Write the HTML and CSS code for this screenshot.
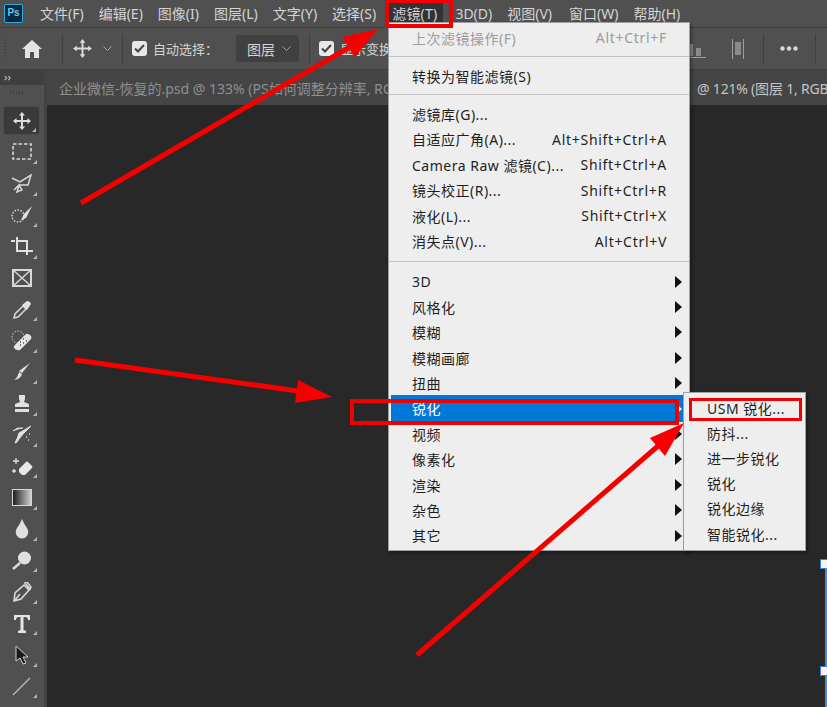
FILE: index.html
```html
<!DOCTYPE html>
<html>

<head>
    <meta charset="UTF-8" />
    <title>Photoshop</title>
    <link rel="stylesheet" href="styles.css">
</head>

<body>
    <div class="app">
        <div class="menubar">
            <span class="logo">Ps</span>
            <span class="mi">文件(F)</span>
            <span class="mi">编辑(E)</span>
            <span class="mi">图像(I)</span>
            <span class="mi">图层(L)</span>
            <span class="mi">文字(Y)</span>
            <span class="mi">选择(S)</span>
            <span class="mi active">滤镜(T)</span>
            <span class="mi">3D(D)</span>
            <span class="mi">视图(V)</span>
            <span class="mi mi-window">窗口(W)</span>
            <span class="mi">帮助(H)</span>
        </div>

        <div class="optbar">
            <span class="optgrip"></span>
            <svg class="home" width="20" height="18" viewBox="0 0 20 18"><path d="M10 0 L20 9 H17 V18 H12 V12 H8 V18 H3 V9 H0 Z" fill="#e4e4e4"/></svg>
            <span class="vsep"></span>
            <svg class="move" width="19" height="19" viewBox="0 0 20 20"><path d="M10 0 L13 4 H11 V9 H16 V7 L20 10 L16 13 V11 H11 V16 H13 L10 20 L7 16 H9 V11 H4 V13 L0 10 L4 7 V9 H9 V4 H7 Z" fill="#dcdcdc"/></svg>
            <svg class="chev" width="9" height="5" viewBox="0 0 9 5"><path d="M0.500 0.500 L4.500 4.500 L8.500 0.500" fill="none" stroke="#a5a5a5"/></svg>
            <span class="vsep"></span>
            <span class="check"><svg width="11" height="9" viewBox="0 0 11 9"><path d="M1 4.500 L4 7.500 L10 1" fill="none" stroke="#444" stroke-width="2"/></svg></span>
            <span class="optlabel">自动选择：</span>
            <span class="select">图层<svg width="9" height="5" viewBox="0 0 9 5"><path d="M0.500 0.500 L4.500 4.500 L8.500 0.500" fill="none" stroke="#a5a5a5"/></svg></span>
            <span class="vsep"></span>
            <span class="check"><svg width="11" height="9" viewBox="0 0 11 9"><path d="M1 4.500 L4 7.500 L10 1" fill="none" stroke="#444" stroke-width="2"/></svg></span>
            <span class="optlabel">显示变换控件</span>
            <div class="opt-right">
                <svg class="bars" width="16" height="18" viewBox="0 0 16 18"><path d="M0 17.500 H16" stroke="#a0a0a0"/><rect x="0" y="4" width="3" height="12" fill="#8a8a8a"/><rect x="6" y="8" width="5" height="8" fill="#8a8a8a"/></svg>
                <svg class="dist" width="12" height="20" viewBox="0 0 12 20"><path d="M0.500 0 V20 M11.500 0 V20" stroke="#a0a0a0"/><rect x="3" y="3" width="6" height="13" fill="#8a8a8a"/></svg>
                <span class="vsep"></span>
                <svg class="dots" width="18" height="5" viewBox="0 0 18 5"><circle cx="2.500" cy="2.500" r="2.200" fill="#d8d8d8"/><circle cx="9" cy="2.500" r="2.200" fill="#d8d8d8"/><circle cx="15.500" cy="2.500" r="2.200" fill="#d8d8d8"/></svg>
                <span class="vsep"></span>
            </div>
        </div>

        <div class="main">
            <div class="toolbar">
                <div class="collapse">››</div>
                <div class="grip"></div>
                <div class="tool selected"><svg width="20" height="20" viewBox="0 0 20 20"><path d="M10 1 L13 4.500 H11 V9 H15.500 V7 L19 10 L15.500 13 V11 H11 V15.500 H13 L10 19 L7 15.500 H9 V11 H4.500 V13 L1 10 L4.500 7 V9 H9 V4.500 H7 Z" fill="#dedede"/></svg></div>
                <div class="tool"><svg class="up" width="20" height="17" viewBox="0 0 20 17"><rect x="1" y="1" width="18" height="15" fill="none" stroke="#d8d8d8" stroke-width="1.600" stroke-dasharray="3.500 2"/></svg></div>
                <div class="tool"><svg width="22" height="20" viewBox="0 0 22 20"><path d="M1 4 L9 8 L20 1 L17 11 L8 11 L3 16 M8 11 L6 18 L11 16 Z" fill="none" stroke="#d8d8d8" stroke-width="1.500"/></svg></div>
                <div class="tool"><svg width="22" height="20" viewBox="0 0 22 20"><circle cx="7" cy="11" r="6" fill="none" stroke="#d8d8d8" stroke-width="1.500" stroke-dasharray="1.500 1.500"/><path d="M21 1 L13 9 L10 15 L15 13 Z" fill="#e0e0e0"/></svg></div>
                <div class="tool"><svg width="22" height="20" viewBox="0 0 22 20"><path d="M0 4 H4 M6 0 V14 H18 M6 4 H16 V18 M18 14 H22" fill="none" stroke="#e0e0e0" stroke-width="2"/></svg></div>
                <div class="tool no-tri"><svg width="20" height="18" viewBox="0 0 20 18"><rect x="1" y="1" width="18" height="16" fill="none" stroke="#d8d8d8" stroke-width="2"/><path d="M1 1 L19 17 M19 1 L1 17" stroke="#d8d8d8" stroke-width="1.500"/></svg></div>
                <div class="tool"><svg width="20" height="20" viewBox="0 0 20 20"><path d="M2 18 L3 14 L11 6 L14 9 L6 17 Z" fill="none" stroke="#d8d8d8" stroke-width="1.500"/><path d="M10 5 L15 1 Q18 1 19 4 L15 10 Z" fill="#e0e0e0"/></svg></div>
                <div class="tool"><svg width="22" height="22" viewBox="0 0 22 22"><circle cx="7" cy="7" r="6" fill="none" stroke="#d8d8d8" stroke-dasharray="1.500 1.500"/><path d="M3 16 L15 4 Q17 3 20 6 Q21 8 20 9 L9 20 Q7 21 4 19 Q2 17 3 16 Z" fill="#e4e4e4"/><path d="M9 12 h1 M12 9 h1 M12 13 h1 M9 15 h1 M15 11 h1" stroke="#555" stroke-width="1.600"/></svg></div>
                <div class="tool"><svg width="20" height="20" viewBox="0 0 20 20"><path d="M18 1 L10 11 L7 9 Z M7 10 L10 12 Q9 17 2 18 Q6 15 7 10 Z" fill="#e0e0e0"/></svg></div>
                <div class="tool"><svg width="20" height="20" viewBox="0 0 20 20"><path d="M7 1 H13 V5 L12 8 L17 10 V13 H3 V10 L8 8 L7 5 Z M3 15 H17 V18 H3 Z" fill="#e0e0e0"/></svg></div>
                <div class="tool"><svg width="22" height="20" viewBox="0 0 22 20"><path d="M20 1 L12 9 L8 14 Q6 18 4 18 Q7 12 8 8 Q12 6 20 1 Z M2 6 Q6 2 12 3" fill="#e0e0e0" stroke="#e0e0e0"/><path d="M15 12 h1 M18 9 h1 M17 15 h1" stroke="#ddd" stroke-width="1.500"/></svg></div>
                <div class="tool"><svg width="22" height="20" viewBox="0 0 22 20"><path d="M8 12 L15 5 Q16 4 17 5 L21 9 Q22 10 21 11 L14 18 H11 L8 15 Z" fill="#e8e8e8"/><path d="M5 1 V7 M2 4 H8 M3 12 V16 M1 14 H5" stroke="#e0e0e0" stroke-width="1.300"/></svg></div>
                <div class="tool"><span class="gradient"></span></div>
                <div class="tool"><svg width="14" height="20" viewBox="0 0 14 20"><path d="M7 0 Q9 5 12 9 Q15 14 11 18 Q7 21 3 18 Q-1 14 2 9 Q5 5 7 0 Z" fill="#e0e0e0"/></svg></div>
                <div class="tool"><svg width="20" height="20" viewBox="0 0 20 20"><circle cx="12.500" cy="7" r="6.500" fill="#e0e0e0"/><path d="M8 12 L1 18" stroke="#d8d8d8" stroke-width="2.500"/></svg></div>
                <div class="tool"><svg width="20" height="20" viewBox="0 0 20 20"><path d="M2 19 L3 11 L12 3 L17 8 L9 17 Z M13 1 L15 0 L19 5 L18 7 Z M3 18 L8 12" fill="none" stroke="#d8d8d8" stroke-width="1.600"/></svg></div>
                <div class="tool"><svg width="16" height="18" viewBox="0 0 16 18"><path d="M0 0 H16 V5 H14 Q14 2 11 2 H9.500 V15 L12 16 V18 H4 V16 L6.500 15 V2 H5 Q2 2 2 5 H0 Z" fill="#e4e4e4"/></svg></div>
                <div class="tool"><svg width="14" height="20" viewBox="0 0 14 20"><path d="M1 1 L13 12 H8 L11 18 L8 19 L5 13 L1 16 Z" fill="#1a1a1a" stroke="#cfcfcf"/></svg></div>
                <div class="tool"><svg width="20" height="20" viewBox="0 0 20 20"><path d="M1 19 L18 2" stroke="#bdbdbd" stroke-width="1.300"/></svg></div>
            </div>
            <div class="workspace">
                <div class="tabbar">
                    <span class="tab-left">企业微信-恢复的.psd @ 133% (PS如何调整分辨率, RGB/8#) *</span>
                    <span class="tab-right">@ 121% (图层 1, RGB</span>
                </div>
                <div class="canvas"></div>
            </div>
        </div>

        <div class="handles">
            <span class="handle"></span>
            <span class="edge edge-long"></span>
            <span class="handle"></span>
            <span class="edge"></span>
        </div>

        <!-- filter menu -->
        <div class="menu">
            <div class="row disabled"><span>上次滤镜操作(F)</span><span>Alt+Ctrl+F</span></div>
            <div class="sep"></div>
            <div class="row"><span>转换为智能滤镜(S)</span></div>
            <div class="sep"></div>
            <div class="row"><span>滤镜库(G)...</span></div>
            <div class="row"><span>自适应广角(A)...</span><span>Alt+Shift+Ctrl+A</span></div>
            <div class="row"><span>Camera Raw 滤镜(C)...</span><span>Shift+Ctrl+A</span></div>
            <div class="row"><span>镜头校正(R)...</span><span>Shift+Ctrl+R</span></div>
            <div class="row"><span>液化(L)...</span><span>Shift+Ctrl+X</span></div>
            <div class="row"><span>消失点(V)...</span><span>Alt+Ctrl+V</span></div>
            <div class="sep sep-wide"></div>
            <div class="row sub"><span>3D</span></div>
            <div class="row sub"><span>风格化</span></div>
            <div class="row sub"><span>模糊</span></div>
            <div class="row sub"><span>模糊画廊</span></div>
            <div class="row sub"><span>扭曲</span></div>
            <div class="row sub hot"><span>锐化</span></div>
            <div class="row sub"><span>视频</span></div>
            <div class="row sub"><span>像素化</span></div>
            <div class="row sub"><span>渲染</span></div>
            <div class="row sub"><span>杂色</span></div>
            <div class="row sub"><span>其它</span></div>
        </div>

        <div class="submenu">
            <div class="row"><span>USM 锐化...</span></div>
            <div class="row"><span>防抖...</span></div>
            <div class="row"><span>进一步锐化</span></div>
            <div class="row"><span>锐化</span></div>
            <div class="row"><span>锐化边缘</span></div>
            <div class="row"><span>智能锐化...</span></div>
        </div>

        <!-- red annotations -->
        <span class="box box-menu"></span>
        <span class="box box-row"></span>
        <span class="box box-usm"></span>
        <svg class="arrows" width="827" height="707" viewBox="0 0 827 707">
            <g stroke="#f50000" stroke-width="5">
                <line x1="81" y1="203" x2="350" y2="47"/>
                <line x1="75" y1="360" x2="298" y2="391"/>
                <line x1="417" y1="655" x2="658" y2="446"/>
            </g>
            <g fill="#f50000">
                <polygon points="378,29 342,37 355,57"/>
                <polygon points="332,397 298,380 295,403"/>
                <polygon points="684,423 650,438 665,456"/>
            </g>
        </svg>
    </div>
</body>

</html>
```

FILE: styles.css
```css
* {
    box-sizing: border-box;
}

html,
body {
    margin: 0;
    padding: 0;
}

body {
    width: 827px;
    height: 707px;
    overflow: hidden;
    font-family: "Noto Sans", "Noto Sans CJK SC", sans-serif;
    background-color: #282828;
}

.app {
    position: relative;
    width: 827px;
    height: 707px;
    overflow: hidden;
    display: flex;
    flex-direction: column;
}

/* top menu */
.menubar {
    display: flex;
    align-items: center;
    height: 28px;
    padding-left: 4px;
    gap: 15px;
    background-color: #505050;
    color: #d4d4d4;
    font-size: 14px;
    border-bottom: 1px solid #3c3c3c;
}

.logo {
    width: 19px;
    height: 19px;
    margin-right: 2px;
    border: 1.500px solid #31a8e0;
    border-radius: 2px;
    background-color: #0b2a3c;
    color: #6fc6ee;
    font-family: "Liberation Sans", sans-serif;
    font-size: 10px;
    font-weight: bold;
    line-height: 16px;
    text-align: center;
}

.mi {
    white-space: nowrap;
    line-height: 27px;
}

.mi.active {
    background-color: #333;
    padding: 0 6px;
    margin: 0 -3px 0 -5px;
    letter-spacing: 0.200px;
}

.mi-window {
    margin-left: 2px;
}

/* options */
.optbar {
    position: relative;
    display: flex;
    align-items: center;
    height: 42px;
    background-color: #505050;
    border-bottom: 1px solid #404040;
    color: #d4d4d4;
    font-size: 13px;
}

.optgrip {
    position: absolute;
    left: 4px;
    top: 9px;
    width: 2px;
    height: 23px;
    background: repeating-linear-gradient(#3f3f3f 0 1px, transparent 1px 3px);
}

.home {
    margin-left: 22px;
    margin-right: 20px;
}

.vsep {
    width: 1px;
    height: 30px;
    background-color: #404040;
}

.move {
    margin-left: 10px;
}

.chev {
    margin: 0 10px 0 11px;
}

.check {
    display: flex;
    align-items: center;
    justify-content: center;
    width: 15px;
    height: 15px;
    margin-left: 9px;
    border-radius: 3px;
    background-color: #e8e8e8;
}

.optlabel {
    margin-left: 6px;
    white-space: nowrap;
}

.select {
    display: flex;
    align-items: center;
    justify-content: space-between;
    width: 63px;
    height: 27px;
    margin: 0 10px 0 18px;
    padding: 0 8px 0 11px;
    border-radius: 3px;
    background-color: #404040;
    font-size: 14px;
    white-space: nowrap;
}

.opt-right {
    position: absolute;
    left: 690px;
    top: 0;
    height: 41px;
    display: flex;
    align-items: center;
}

.dist {
    margin: 0 19px 0 26px;
}

.dots {
    margin: 0 17px 0 16px;
}

/* tools */
.main {
    flex: 1;
    display: flex;
    min-height: 0;
}

.toolbar {
    width: 47px;
    display: flex;
    flex-direction: column;
    background-color: #505050;
    border-right: 3px solid #424242;
}

.collapse {
    height: 15px;
    background-color: #3f3f3f;
    color: #cfcfcf;
    font-size: 11px;
    line-height: 13px;
    padding-left: 4px;
}

.grip {
    height: 21px;
    background: repeating-linear-gradient(90deg, #3f3f3f 0 1px, transparent 1px 3px) 10px 6px / 14px 3px no-repeat;
}

.tool {
    position: relative;
    height: 31.400px;
    display: flex;
    align-items: center;
    justify-content: center;
    flex: none;
}

.tool.selected {
    margin: 0 4px 2px 3px;
    height: 29px;
    background-color: #3a3a3a;
    border: 1px solid #4c4c4c;
    border-radius: 3px;
}

.tool::after {
    content: "";
    position: absolute;
    right: 7px;
    bottom: 4px;
    border-left: 4px solid transparent;
    border-bottom: 4px solid #b4b4b4;
}

.tool.selected::after {
    right: 3px;
    bottom: 2px;
}

.tool.no-tri::after {
    display: none;
}

.up {
    margin-bottom: 2px;
}

.gradient {
    width: 20px;
    height: 17px;
    border: 1px solid #d8d8d8;
    background: linear-gradient(90deg, #1f1f1f, #cfcfcf);
}

/* documents */
.workspace {
    flex: 1;
    display: flex;
    flex-direction: column;
    min-width: 0;
}

.tabbar {
    height: 35px;
    display: flex;
    align-items: center;
    padding-left: 12px;
    background-color: #454545;
    color: #8f8f8f;
    font-size: 14px;
    white-space: nowrap;
    overflow: hidden;
}

.tab-left {
    flex: none;
    width: 638px;
    overflow: hidden;
}

.tab-right {
    flex: none;
    color: #c4c4c4;
    letter-spacing: -0.200px;
}

.canvas {
    flex: 1;
    background-color: #282828;
}

.handles {
    position: absolute;
    left: 820px;
    top: 559px;
    width: 7px;
    height: 148px;
    display: flex;
    flex-direction: column;
    align-items: flex-end;
}

.handle {
    flex: none;
    width: 7px;
    height: 10px;
    background-color: #f4f4f4;
    border: 1px solid #3f7fe0;
    border-right: 0;
}

.edge {
    flex: 1;
    width: 2px;
    background-color: #2b95f5;
}

.edge-long {
    flex: none;
    height: 97px;
}

/* menus */
.menu,
.submenu {
    position: absolute;
    background-color: #eeeeee;
    border: 1px solid #a0a0a0;
    box-shadow: 2px 2px 3px rgba(0, 0, 0, 0.35);
    color: #1e1e1e;
    font-size: 14px;
    letter-spacing: 0.500px;
}

.menu {
    left: 388px;
    top: 22px;
    width: 302px;
    height: 529px;
    padding-top: 2px;
}

.submenu {
    left: 683px;
    top: 392px;
    width: 123px;
    height: 159px;
    padding-top: 2px;
}

.row {
    position: relative;
    display: flex;
    justify-content: space-between;
    align-items: center;
    height: 25.500px;
    padding: 0 22px 0 23px;
    white-space: nowrap;
}

.row span + span {
    letter-spacing: 0.700px;
}

.submenu .row {
    height: 25.200px;
    padding: 0 0 0 23px;
}

.menu .sub {
    height: 25.400px;
}

.disabled {
    color: #9c9c9c;
}

.sep {
    height: 1px;
    margin: 5px 0 6.600px 0;
    background-color: #c4c4c4;
}

.sep-wide {
    margin: 7px 0 6.500px 0;
}

.sub::after {
    content: "";
    position: absolute;
    right: 7px;
    top: 7px;
    border-left: 7px solid #111;
    border-top: 6px solid transparent;
    border-bottom: 6px solid transparent;
}

.row.hot {
    margin: 0 2px;
    padding-left: 21px;
    background-color: #0078d7;
    box-shadow: 0 -1px 0 #0078d7, 0 1px 0 #0078d7;
    color: #fff;
}

.hot::after {
    right: 5px;
    border-left-color: #fff;
}

/* annotations */
.box {
    position: absolute;
}

.box-menu {
    left: 385px;
    top: -1px;
    width: 68px;
    height: 29px;
    border: 4px solid #f00000;
}

.box-row {
    left: 350px;
    top: 399px;
    width: 329px;
    height: 26px;
    border: 4px solid #f00000;
}

.box-usm {
    left: 689px;
    top: 398px;
    width: 113px;
    height: 23px;
    border: 3px solid #f00000;
}

.arrows {
    position: absolute;
    left: 0;
    top: 0;
    pointer-events: none;
}
```
